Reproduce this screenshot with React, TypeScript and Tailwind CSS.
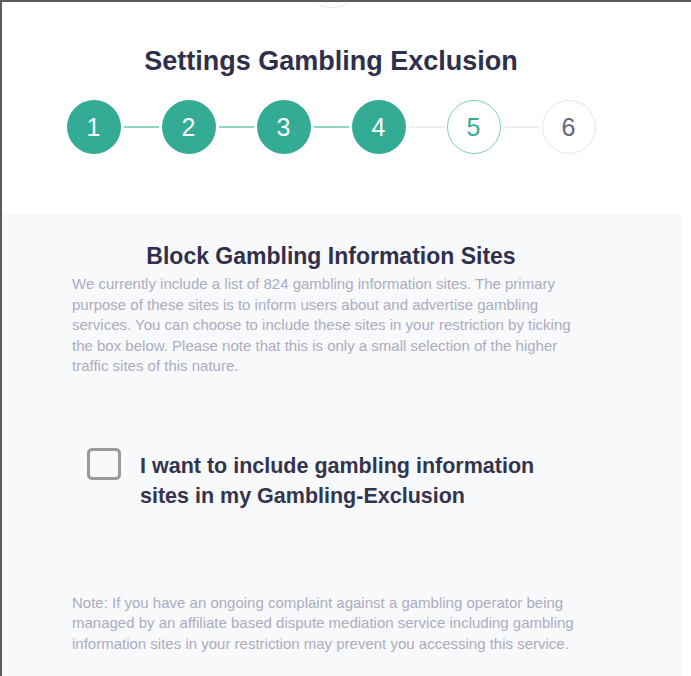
import React from "react";

const steps = [1, 2, 3, 4, 5, 6];

function Step({ n }: { n: number }) {
  if (n <= 4) {
    return (
      <div className="w-[54px] h-[54px] rounded-full bg-[#34ab94] flex items-center justify-center text-white text-[25px] leading-none shrink-0">
        {n}
      </div>
    );
  }
  if (n === 5) {
    return (
      <div className="w-[54px] h-[54px] rounded-full bg-white border-[1.5px] border-[#7fcdbc] flex items-center justify-center text-[#34ab94] text-[25px] leading-none shrink-0">
        {n}
      </div>
    );
  }
  return (
    <div className="w-[54px] h-[54px] rounded-full bg-white border-[1.5px] border-[#e6e6ea] flex items-center justify-center text-[#66647d] text-[25px] leading-none shrink-0">
      {n}
    </div>
  );
}

export default function App() {
  return (
    <div className="relative w-[691px] h-[676px] overflow-hidden bg-white border-t-2 border-l-2 border-[#5c5c5c] font-['Liberation_Sans']">
      <div className="absolute left-[299px] top-[-56px] w-[62px] h-[62px] rounded-full border border-[#ececef] bg-white" />
      <div className="h-[212px] flex flex-col items-center pr-[31px]">
        <h1 className="mt-[44px] text-[27px] leading-[30px] font-bold text-[#2f2f4c]">
          Settings Gambling Exclusion
        </h1>
        <div className="mt-[24px] flex items-center">
          {steps.map((n, i) => (
            <React.Fragment key={n}>
              <Step n={n} />
              {i < steps.length - 1 && (
                <div
                  className={
                    i < 3
                      ? "w-[35px] h-[1.5px] mx-[3px] bg-[#8fd4c5]"
                      : "w-[35px] h-[1.5px] mx-[3px] bg-[#efeff2]"
                  }
                />
              )}
            </React.Fragment>
          ))}
        </div>
      </div>
      <div className="w-[679px] h-[462px] bg-[#f8f9fb]">
        <h2 className="w-[658px] pt-[30px] text-center text-[23px] leading-[24px] font-bold text-[#30304d]">
          Block Gambling Information Sites
        </h2>
        <p className="ml-[70px] w-[505px] mt-[6px] text-[15px] leading-[20.5px] text-[#adacbe]">
          We currently include a list of 824 gambling information sites. The primary purpose of these sites is to inform users about and advertise gambling services. You can choose to include these sites in your restriction by ticking the box below. Please note that this is only a small selection of the higher traffic sites of this nature.
        </p>
        <label className="ml-[70px] mt-[71px] flex items-start gap-[19px] pl-[15px]">
          <span className="w-[34px] h-[32px] shrink-0 rounded-[5px] border-[3px] border-[#9b9b9f] bg-[#f8f9fb]" />
          <span className="mt-[3px] text-[21.5px] leading-[30px] font-bold text-[#34344f]">
            I want to include gambling information
            <br />
            sites in my Gambling-Exclusion
          </span>
        </label>
        <p className="ml-[70px] w-[505px] mt-[82px] text-[15px] leading-[20.5px] text-[#adacbe]">
          Note: If you have an ongoing complaint against a gambling operator being managed by an affiliate based dispute mediation service including gambling information sites in your restriction may prevent you accessing this service.
        </p>
      </div>
    </div>
  );
}
